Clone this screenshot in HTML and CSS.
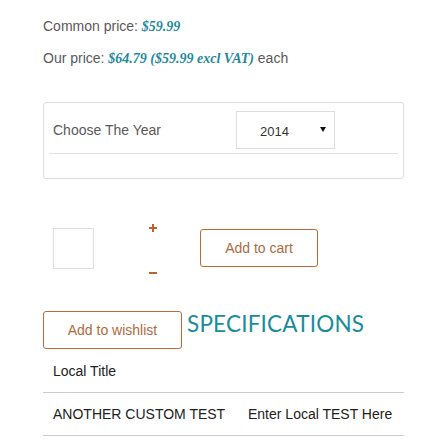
FILE: index.html
```html
<!DOCTYPE html>
<html lang="en">

<head>
    <meta charset="UTF-8">
    <meta name="viewport" content="width=device-width, initial-scale=1.0">
    <title>Product</title>
    <link rel="stylesheet" href="styles.css">
</head>

<body>
    <div class="product">
        <p class="price">Common price: <span class="amount">$59.99</span></p>
        <p class="price">Our price: <span class="amount">$64.79 ($59.99 excl VAT)</span> each</p>

        <div class="options">
            <div class="option-row">
                <span class="option-label">Choose The Year</span>
                <div class="select">
                    <span class="select-value">2014</span>
                    <span class="select-arrow"></span>
                </div>
            </div>
            <div class="option-rule"></div>
        </div>

        <div class="cart-row">
            <div class="qty"></div>
            <div class="qty-controls">
                <svg class="qty-btn" width="8" height="8" viewBox="0 0 8 8">
                    <rect x="3" y="0" width="2" height="8" fill="#b5652f" />
                    <rect x="0" y="3" width="8" height="2" fill="#b5652f" />
                </svg>
                <svg class="qty-btn" width="8" height="2" viewBox="0 0 8 2">
                    <rect x="0" y="0" width="8" height="2" fill="#b5652f" />
                </svg>
            </div>
            <a class="btn btn-cart">Add to cart</a>
        </div>

        <div class="wish-row">
            <a class="btn btn-wish">Add to wishlist</a>
            <h2 class="spec-title">SPECIFICATIONS</h2>
        </div>

        <div class="specs">
            <div class="spec-row">
                <span class="spec-name">Local Title</span>
                <span class="spec-value"></span>
            </div>
            <div class="spec-row">
                <span class="spec-name">ANOTHER CUSTOM TEST</span>
                <span class="spec-value">Enter Local TEST Here</span>
            </div>
        </div>
    </div>
</body>
</html>
```

FILE: styles.css
```css
html,
body {
    margin: 0;
    padding: 0;
    background: #fff;
}

body {
    font-family: "Liberation Sans", Arial, sans-serif;
    font-size: 14px;
    line-height: 20px;
    color: #5a5a5a;
}

.product {
    width: 361px;
    padding: 16px 0 0 43px;
}

.price {
    margin: 0 0 12px 0;
    height: 20px;
}

.amount {
    font-family: "Liberation Serif", "Times New Roman", serif;
    font-style: italic;
    font-weight: bold;
    line-height: 1;
    color: #1f8a9b;
}

.options {
    margin-top: 34px;
    border: 1px solid #ddd;
    border-radius: 3px;
    padding: 8px 5px 0 5px;
    box-sizing: border-box;
    height: 77px;
}

.option-row {
    display: flex;
    align-items: center;
}

.option-label {
    width: 187px;
    padding-left: 4px;
    box-sizing: border-box;
}

.select {
    width: 99px;
    height: 38px;
    border: 1px solid #ddd;
    box-sizing: border-box;
    display: flex;
    align-items: center;
    position: relative;
}

.select-value {
    margin-left: 23px;
    margin-top: 3px;
    font-size: 13px;
    color: #333;
}

.select-arrow {
    position: absolute;
    right: 8px;
    top: 15px;
    border-left: 3px solid transparent;
    border-right: 3px solid transparent;
    border-top: 5px solid #111;
}

.option-rule {
    margin-top: 4px;
    border-top: 1px solid #e3e3e3;
}

.cart-row {
    display: flex;
    align-items: flex-start;
    margin-top: 43px;
}

.qty {
    width: 41px;
    height: 41px;
    border: 1px solid #ddd;
    box-sizing: border-box;
    margin: 6px 0 0 10px;
}

.qty-controls {
    display: flex;
    flex-direction: column;
    justify-content: space-between;
    height: 50px;
    margin-left: 55px;
    margin-top: 2px;
}

.qty-btn {
    display: block;
}

.btn {
    display: flex;
    align-items: center;
    justify-content: center;
    box-sizing: border-box;
    font-size: 14px;
    color: #b06a40;
    background: #fff;
    border: 1px solid #c06a34;
    border-radius: 3px;
    cursor: pointer;
}

.btn-cart {
    width: 118px;
    height: 38px;
    margin: 7px 0 0 43px;
}

.wish-row {
    display: flex;
    align-items: flex-start;
    margin-top: 37px;
}

.btn-wish {
    width: 139px;
    height: 38px;
}

.spec-title {
    margin: 1px 0 0 5px;
    font-family: Lato, "Liberation Sans", sans-serif;
    font-weight: normal;
    font-size: 22.5px;
    line-height: 24px;
    letter-spacing: 0.2px;
    color: #1a8c9c;
}

.specs {
    margin-top: 1px;
    width: 361px;
}

.spec-row {
    display: flex;
    padding: 11px 0 11px 10px;
    border-bottom: 1px solid #ccc;
    color: #222;
}

.spec-name {
    width: 195px;
}
```
